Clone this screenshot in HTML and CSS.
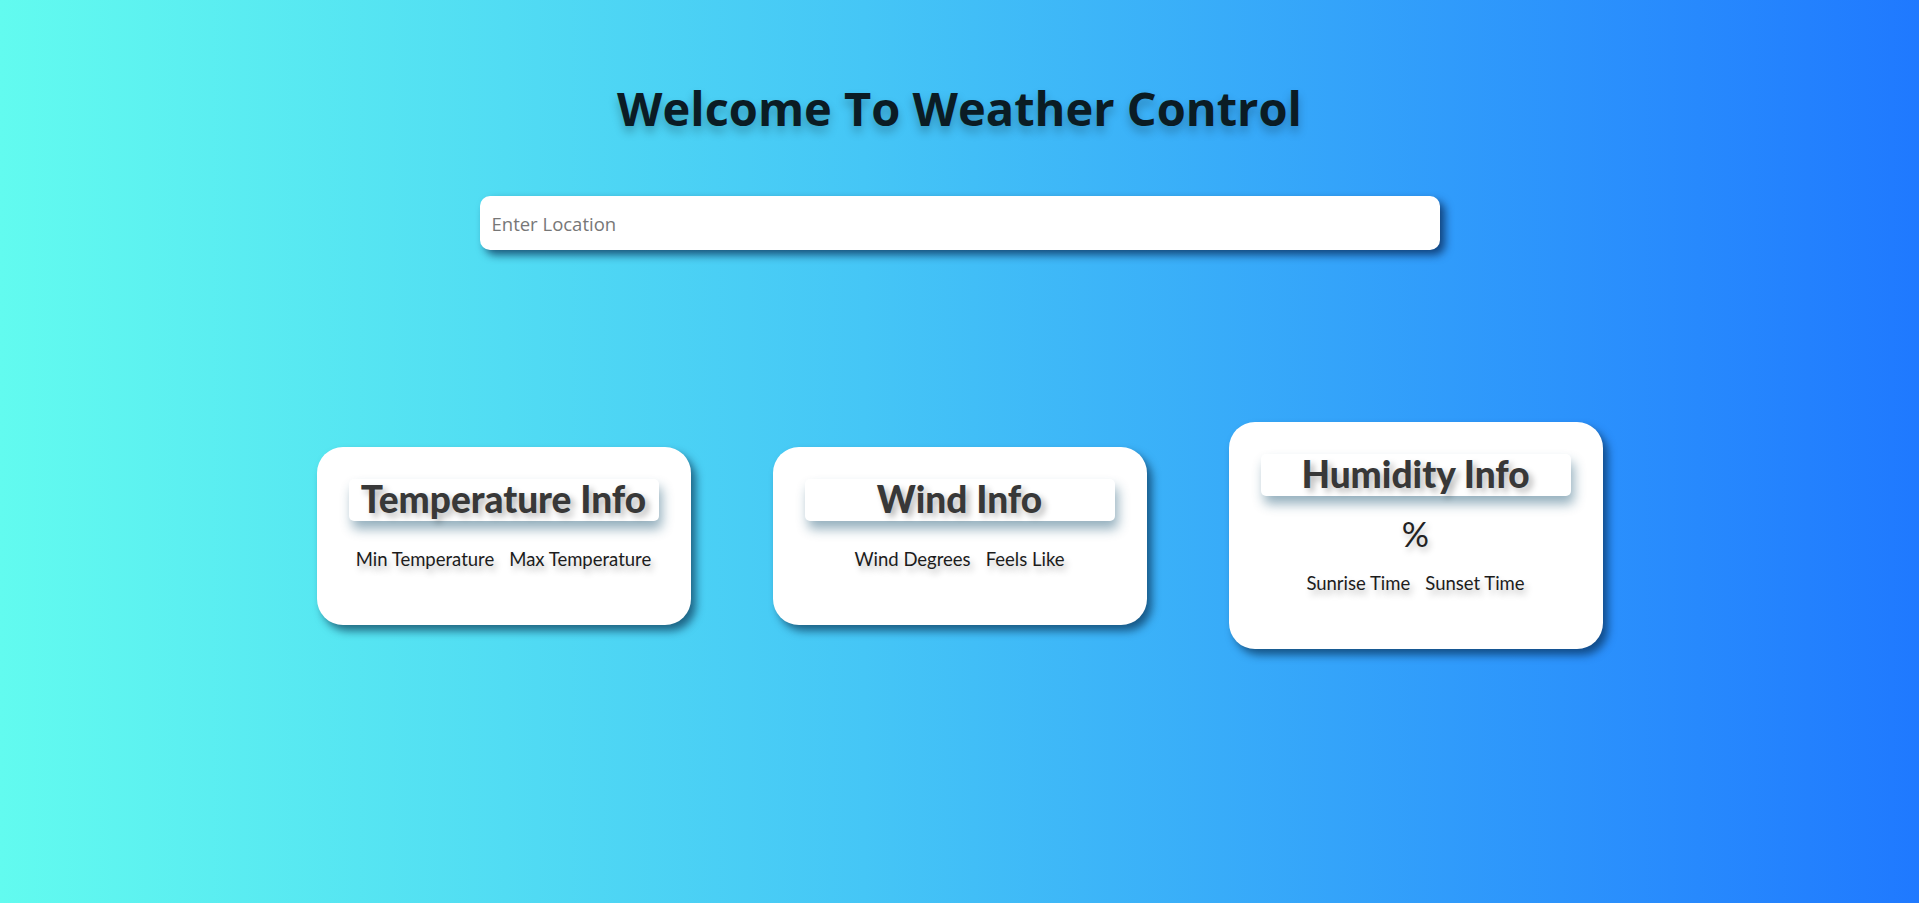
FILE: index.html
```html
<!DOCTYPE html>
<html lang="en">
<head>
<meta charset="utf-8">
<title>Weather Control</title>
<link rel="stylesheet" href="styles.css">
</head>
<body>
<main class="page">
  <h1 class="title">Welcome To Weather Control</h1>
  <input class="search" type="text" placeholder="Enter Location">
  <section class="cards">
    <div class="card">
      <h2 class="card-title">Temperature Info</h2>
      <div class="row row-plain">
        <span>Min Temperature</span>
        <span>Max Temperature</span>
      </div>
    </div>
    <div class="card">
      <h2 class="card-title">Wind Info</h2>
      <div class="row row-plain">
        <span>Wind Degrees</span>
        <span>Feels Like</span>
      </div>
    </div>
    <div class="card">
      <h2 class="card-title">Humidity Info</h2>
      <div class="value">%</div>
      <div class="row">
        <span>Sunrise Time</span>
        <span>Sunset Time</span>
      </div>
    </div>
  </section>
</main>
</body>
</html>
```

FILE: styles.css
```css
html, body {
  margin: 0;
  padding: 0;
}

body {
  min-height: 100vh;
  background: linear-gradient(to right, #62fbef 0%, #45c6f6 45%, #1f79ff 100%);
  font-family: "Lato", "Open Sans", sans-serif;
}

.page {
  display: flex;
  flex-direction: column;
  align-items: center;
  height: 903px;
}

.title {
  margin: 79px 0 0;
  font-family: "Open Sans", "DejaVu Sans", sans-serif;
  font-weight: 700;
  font-size: 47px;
  line-height: 58px;
  color: #0b1c24;
  text-shadow: 0 6px 10px rgba(0, 0, 0, 0.25);
}

.search {
  box-sizing: border-box;
  margin-top: 59px;
  width: 960px;
  height: 54px;
  border: none;
  border-radius: 10px;
  padding: 0 12px;
  background: #fff;
  font-family: "Open Sans", sans-serif;
  font-size: 18.5px;
  color: #333;
  box-shadow: 5px 5px 8px rgba(0, 20, 60, 0.65);
  outline: none;
}

.search::placeholder {
  color: #777;
}

.cards {
  margin-top: 172px;
  display: flex;
  align-items: center;
  justify-content: center;
  gap: 82px;
}

.card {
  box-sizing: border-box;
  width: 374px;
  padding: 32px 32px 56px;
  background: #fff;
  border-radius: 26px;
  box-shadow: 5px 6px 9px rgba(0, 30, 60, 0.6);
  display: flex;
  flex-direction: column;
  align-items: stretch;
}

.card-title {
  margin: 0;
  height: 42px;
  line-height: 40px;
  text-align: center;
  background: #fff;
  border-radius: 5px;
  font-family: "Lato", sans-serif;
  font-weight: 900;
  font-size: 37px;
  color: #383838;
  text-shadow: 4px 4px 6px rgba(0, 0, 0, 0.28);
  box-shadow: 3px 8px 12px rgba(20, 80, 110, 0.45);
}

.value {
  margin-top: 18px;
  text-align: center;
  font-size: 34px;
  line-height: 40px;
  color: #222;
  text-shadow: 2px 4px 6px rgba(0, 0, 0, 0.25);
}

.row {
  display: flex;
  justify-content: center;
  gap: 15px;
  margin-top: 19px;
  font-size: 18.5px;
  line-height: 20px;
  color: #1c1c1c;
  text-shadow: 3px 5px 6px rgba(0, 0, 0, 0.25);
}

.row-plain {
  margin-top: 28px;
}
```
